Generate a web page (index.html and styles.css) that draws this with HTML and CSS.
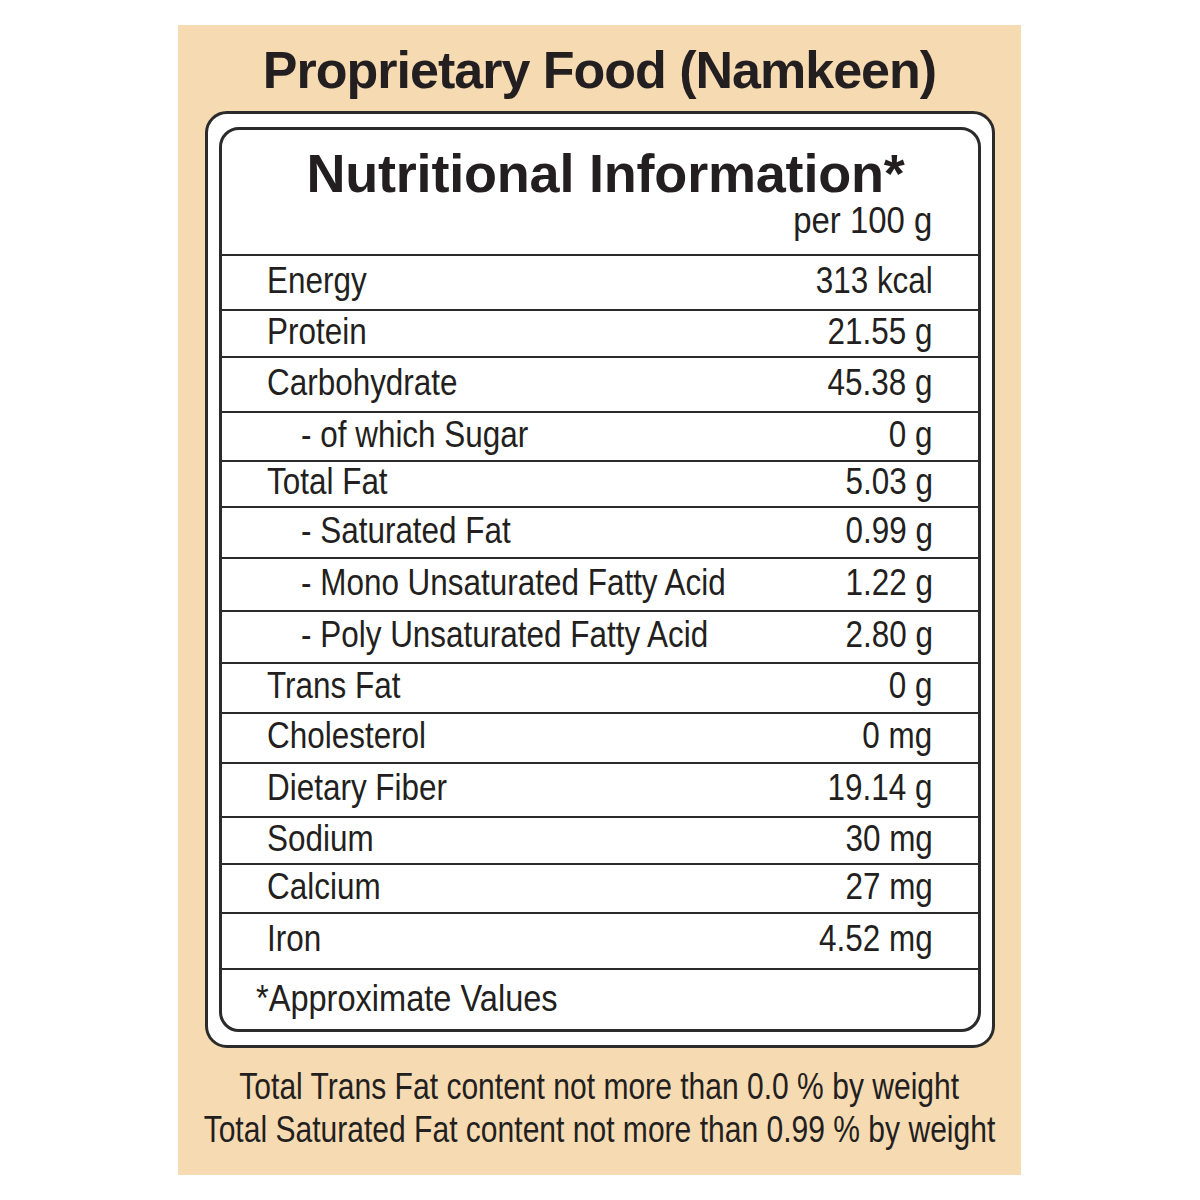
FILE: index.html
```html
<!DOCTYPE html>
<html lang="en">
<head>
<meta charset="utf-8">
<title>Proprietary Food (Namkeen) - Nutritional Information</title>
<link rel="stylesheet" href="styles.css">
</head>
<body>
<div class="panel">
  <h1 class="title">Proprietary Food (Namkeen)</h1>
  <div class="frame">
    <div class="card">
      <div class="head">
        <h2 class="head-title">Nutritional Information*</h2>
        <div class="per"><span class="val per-text">per 100 g</span></div>
      </div>
      <div class="rows">
        <div class="row"><span class="label">Energy</span><span class="val">313 kcal</span></div>
        <div class="row"><span class="label">Protein</span><span class="val">21.55 g</span></div>
        <div class="row"><span class="label">Carbohydrate</span><span class="val">45.38 g</span></div>
        <div class="row sub"><span class="label">- of which Sugar</span><span class="val">0 g</span></div>
        <div class="row"><span class="label">Total Fat</span><span class="val">5.03 g</span></div>
        <div class="row sub"><span class="label">- Saturated Fat</span><span class="val">0.99 g</span></div>
        <div class="row sub"><span class="label">- Mono Unsaturated Fatty Acid</span><span class="val">1.22 g</span></div>
        <div class="row sub"><span class="label">- Poly Unsaturated Fatty Acid</span><span class="val">2.80 g</span></div>
        <div class="row"><span class="label">Trans Fat</span><span class="val">0 g</span></div>
        <div class="row"><span class="label">Cholesterol</span><span class="val">0 mg</span></div>
        <div class="row"><span class="label">Dietary Fiber</span><span class="val">19.14 g</span></div>
        <div class="row"><span class="label">Sodium</span><span class="val">30 mg</span></div>
        <div class="row"><span class="label">Calcium</span><span class="val">27 mg</span></div>
        <div class="row"><span class="label">Iron</span><span class="val">4.52 mg</span></div>
      </div>
      <div class="foot"><span class="label foot-text">*Approximate Values</span></div>
    </div>
  </div>
  <div class="notes">
    <div class="note"><span class="note-text">Total Trans Fat content not more than 0.0 % by weight</span></div>
    <div class="note"><span class="note-text">Total Saturated Fat content not more than 0.99 % by weight</span></div>
  </div>
</div>
</body>
</html>
```
FILE: styles.css
```css
* { box-sizing: border-box; }

body {
  margin: 0;
  background: #ffffff;
  font-family: "Liberation Sans", Arial, sans-serif;
  color: #231f20;
}

.panel {
  margin: 25px 0 0 178px;
  width: 843px;
  height: 1150px;
  background: #f6dab2;
  display: flex;
  flex-direction: column;
  align-items: center;
  overflow: hidden;
}

.panel > * { flex-shrink: 0; }

.title {
  margin: 0;
  height: 86px;
  padding-top: 15px;
  font-weight: 700;
  font-size: 52px;
  line-height: 60px;
  letter-spacing: -1px;
  color: #231f20;
}

.frame {
  width: 790px;
  background: #ffffff;
  border: 3px solid #2b2b2b;
  border-radius: 22px;
  padding: 13px 11px;
}

.card {
  border: 3px solid #2b2b2b;
  border-radius: 20px;
  overflow: hidden;
}

.head {
  height: 126px;
  border-bottom: 2px solid #2b2b2b;
  padding: 15px 45px 0 45px;
}

.head-title {
  margin: 0;
  text-align: center;
  padding-left: 12px;
  font-weight: 700;
  font-size: 54px;
  line-height: 56px;
  letter-spacing: -0.2px;
  color: #231f20;
}

.per {
  display: flex;
  justify-content: flex-end;
  font-size: 37px;
  line-height: 40px;
}

.label,
.val,
.note-text {
  display: inline-block;
  white-space: nowrap;
  transform: scaleX(0.85);
}

.label { transform-origin: left center; }
.val { transform-origin: right center; }
.note-text { transform-origin: center center; transform: scaleX(0.812); }
.per-text { transform: scaleX(0.89); }
.foot-text { transform: scaleX(0.88); }

.row {
  display: flex;
  align-items: center;
  justify-content: space-between;
  border-bottom: 2px solid #2b2b2b;
  padding: 0 45px 4px;
  font-size: 37px;
  line-height: 38px;
  height: 51px;
}

.row.sub .label { margin-left: 34px; }

.row:nth-child(1) { height: 55px; }
.row:nth-child(2) { height: 47px; }
.row:nth-child(3) { height: 55px; }
.row:nth-child(4) { height: 49px; }
.row:nth-child(5) { height: 46px; }
.row:nth-child(6) { height: 51px; }
.row:nth-child(7) { height: 53px; }
.row:nth-child(8) { height: 52px; }
.row:nth-child(9) { height: 50px; }
.row:nth-child(10) { height: 50px; }
.row:nth-child(11) { height: 54px; }
.row:nth-child(12) { height: 47px; }
.row:nth-child(13) { height: 49px; }
.row:nth-child(14) { height: 56px; }

.foot {
  height: 59px;
  display: flex;
  align-items: center;
  padding-left: 34px;
  padding-bottom: 2px;
  font-size: 37px;
  line-height: 40px;
}

.notes {
  width: 100%;
  margin-top: 17px;
}

.note {
  display: flex;
  justify-content: center;
  font-size: 37px;
  line-height: 43px;
}
```
